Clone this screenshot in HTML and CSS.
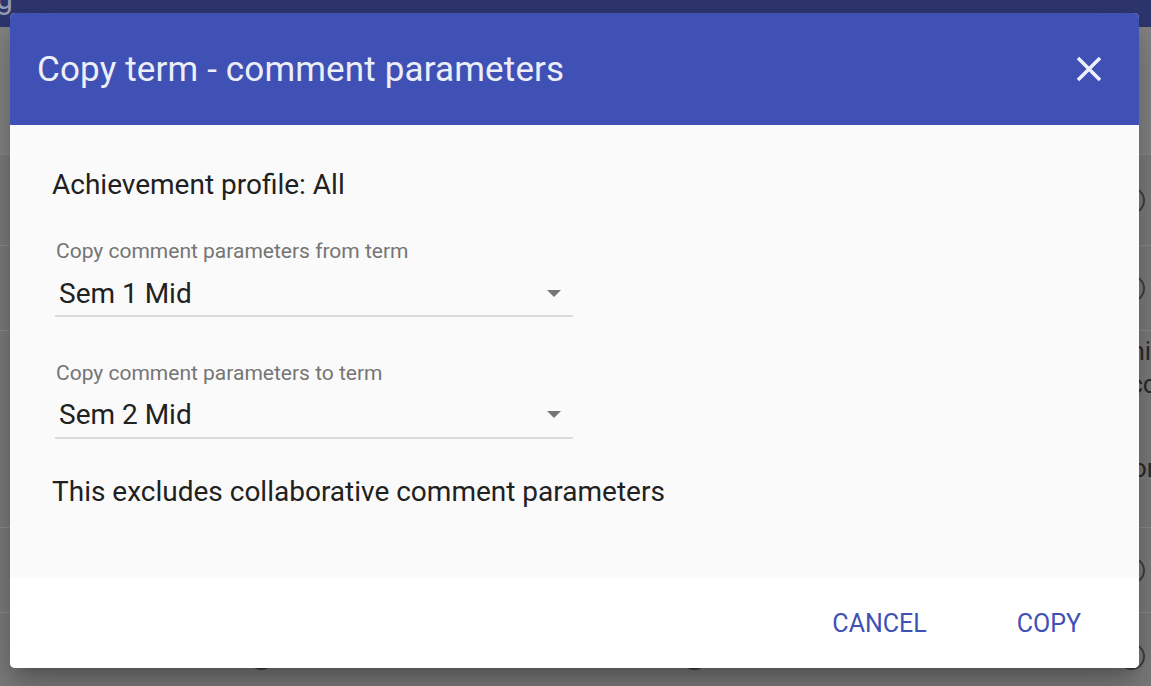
FILE: index.html
```html
<!DOCTYPE html>
<html lang="en">
<head>
<meta charset="utf-8">
<title>Copy term - comment parameters</title>
<link rel="stylesheet" href="styles.css">
</head>
<body>
<div class="page">
  <div class="topbar"><span class="brand">g</span></div>
  <div class="row row-a"></div>
  <div class="row row-b"><span class="radio"></span></div>
  <div class="row row-c"><span class="radio"></span></div>
  <div class="row row-d">
    <div class="side-text">
      <div class="st1">Thi</div>
      <div class="st2">acc</div>
      <div class="st3">Con</div>
    </div>
  </div>
  <div class="row row-e"><span class="radio"></span></div>
  <div class="row row-f">
    <span class="radio r1"></span>
    <span class="radio r2"></span>
    <span class="radio r3"></span>
  </div>
</div>

<div class="dialog" role="dialog" aria-label="Copy term - comment parameters">
  <div class="dialog-head">
    <h1 class="dialog-title">Copy term - comment parameters</h1>
    <button class="close" aria-label="Close">
      <svg viewBox="0 0 24 24" width="42" height="42"><path d="M19 6.41 17.59 5 12 10.59 6.41 5 5 6.41 10.59 12 5 17.59 6.41 19 12 13.41 17.59 19 19 17.59 13.41 12z" fill="currentColor"/></svg>
    </button>
  </div>
  <div class="dialog-body">
    <p class="profile">Achievement profile: All</p>
    <div class="field field-1">
      <div class="field-label">Copy comment parameters from term</div>
      <div class="select">
        <span class="select-value">Sem 1 Mid</span>
        <span class="caret"></span>
      </div>
    </div>
    <div class="field field-2">
      <div class="field-label">Copy comment parameters to term</div>
      <div class="select">
        <span class="select-value">Sem 2 Mid</span>
        <span class="caret"></span>
      </div>
    </div>
    <p class="note">This excludes collaborative comment parameters</p>
  </div>
  <div class="dialog-foot">
    <button class="btn">CANCEL</button>
    <button class="btn">COPY</button>
  </div>
</div>
</body>
</html>
```

FILE: styles.css
```css
* { box-sizing: border-box; }
html, body {
  margin: 0;
  padding: 0;
  width: 1151px;
  height: 686px;
  overflow: hidden;
  font-family: Roboto, "Liberation Sans", Arial, sans-serif;
  background: #7d7d7d;
}

.page {
  display: flex;
  flex-direction: column;
  height: 686px;
}
.topbar {
  height: 27px;
  background: #2e366f;
  flex: none;
  overflow: hidden;
}
.brand {
  display: block;
  color: #9a9fb8;
  font-size: 30px;
  line-height: 30px;
  margin-top: -16px;
  margin-left: -4px;
}
.row {
  flex: none;
  background: #7d7d7d;
  border-bottom: 1px solid #8d8d8d;
  display: flex;
  align-items: center;
  justify-content: flex-end;
  padding-right: 6px;
}
.row-a { height: 128px; background: #858585; }
.row-b { height: 91px; }
.row-c { height: 85px; }
.row-d { height: 197px; align-items: flex-start; }
.row-e { height: 85px; }
.row-f { flex: 1; border-bottom: none; justify-content: flex-start; padding: 0; align-items: flex-start; }

.radio {
  width: 27px;
  height: 27px;
  border: 2px solid #3f3f3f;
  border-radius: 50%;
  flex: none;
}
.row-f .radio { margin-top: 30px; }
.row-f .r1 { margin-left: 248px; }
.row-f .r2 { margin-left: 406px; }
.row-f .r3 { margin-left: 410px; }

.side-text {
  width: 50px;
  margin-right: -20px;
  padding-top: 4px;
  color: #2a2a2a;
  font-size: 26px;
  line-height: 33px;
}
.side-text .st3 { margin-top: 51px; }

/* Dialog */
.dialog {
  position: fixed;
  left: 10px;
  top: 13px;
  width: 1129px;
  height: 655px;
  border-radius: 5px;
  overflow: hidden;
  display: flex;
  flex-direction: column;
  background: #fff;
  box-shadow: 0 11px 15px -7px rgba(0,0,0,.2), 0 24px 38px 3px rgba(0,0,0,.14), 0 9px 46px 8px rgba(0,0,0,.12);
}
.dialog-head {
  height: 112px;
  flex: none;
  background: #3f51b5;
  display: flex;
  align-items: center;
  justify-content: space-between;
  padding: 0 29px 0 27px;
}
.dialog-title {
  margin: 0;
  font-weight: 400;
  font-size: 35px;
  line-height: 40px;
  color: #eceef8;
  letter-spacing: 0.15px;
  padding-top: 2px;
}
.close {
  background: none;
  border: none;
  padding: 0;
  color: #eef0fa;
  width: 42px;
  height: 42px;
  display: flex;
}

.dialog-body {
  height: 453px;
  flex: none;
  background: #fafafa;
  padding: 44px 0 0 42px;
  color: #212121;
}
.profile {
  margin: 0;
  font-size: 28px;
  line-height: 32px;
}
.field {
  width: 518px;
  margin-left: 3px;
}
.field-1 { margin-top: 38px; }
.field-2 { margin-top: 44px; }
.field-label {
  font-size: 21px;
  line-height: 24px;
  color: #757575;
  padding-left: 1px;
}
.select {
  display: flex;
  align-items: center;
  justify-content: space-between;
  margin-top: 15px;
  padding: 0 12px 5px 4px;
  border-bottom: 2px solid #dcdcdc;
}
.field-2 .select { margin-top: 14px; padding-bottom: 6px; }
.select-value {
  font-size: 28px;
  line-height: 32px;
  color: #212121;
}
.caret {
  width: 0;
  height: 0;
  border-left: 7px solid transparent;
  border-right: 7px solid transparent;
  border-top: 7px solid #757575;
  margin-top: -2px;
}
.note {
  margin: 37px 0 0;
  font-size: 28px;
  line-height: 32px;
}

.dialog-foot {
  flex: 1;
  background: #fff;
  display: flex;
  justify-content: flex-end;
  align-items: center;
  gap: 30px;
  padding-right: 28px;
  padding-top: 1px;
}
.btn {
  background: none;
  border: none;
  font-family: inherit;
  font-size: 25px;
  line-height: 28px;
  color: #3f51b5;
  padding: 4px 30px;
  letter-spacing: 0;
}
```
